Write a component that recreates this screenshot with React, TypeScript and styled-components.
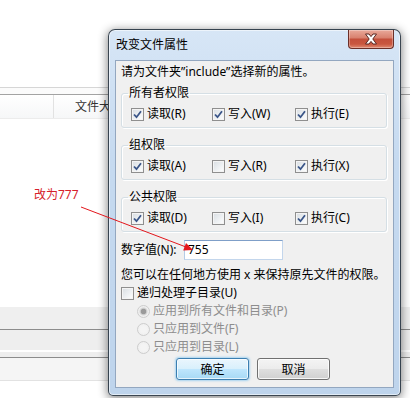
import React from "react";
import styled, { createGlobalStyle } from "styled-components";

const GlobalStyle = createGlobalStyle`
  html, body { margin: 0; padding: 0; background: #ffffff; }
  * { box-sizing: border-box; }
`;

const FONT = `"Noto Sans", "Noto Sans CJK SC", "Microsoft YaHei", sans-serif`;

const Stage = styled.div`
  position: relative;
  width: 410px;
  height: 398px;
  overflow: hidden;
  background: #ffffff;
  font-family: ${FONT};
  font-size: 12px;
  color: #000;
`;

/* ---------- background explorer window ---------- */
const Backdrop = styled.div`
  display: flex;
  flex-direction: column;
  width: 100%;
  height: 100%;
`;

const BlankArea = styled.div<{ $h: number }>`
  height: ${(p) => p.$h}px;
  flex: none;
  background: #ffffff;
`;

const Filler = styled.div`
  flex: 1;
  background: #ffffff;
`;

const RuleBand = styled.div`
  height: 8px;
  flex: none;
  border-top: 1px solid #d6d6d6;
  border-bottom: 1px solid #a3a3a3;
  background: #fbfbfb;
`;

const HeaderRow = styled.div`
  height: 24px;
  flex: none;
  display: flex;
  background: linear-gradient(#ffffff, #f6f7f8);
  border-bottom: 1px solid #ececec;
`;

const HeaderCell = styled.div<{ $w?: number; $pad?: number }>`
  width: ${(p) => (p.$w ? `${p.$w}px` : "auto")};
  flex: ${(p) => (p.$w ? "none" : "1")};
  padding-left: ${(p) => p.$pad ?? 0}px;
  border-right: ${(p) => (p.$w ? "1px solid #e2e2e2" : "none")};
  line-height: 23px;
  color: #333;
  white-space: nowrap;
`;

const Band = styled.div<{ $h: number; $bg: string }>`
  height: ${(p) => p.$h}px;
  flex: none;
  background: ${(p) => p.$bg};
  display: flex;
  flex-direction: column;
  justify-content: flex-end;
`;

const BandHighlight = styled.div`
  height: 2px;
  margin-bottom: 5px;
  background: #ffffff;
`;

const Rule = styled.div<{ $c: string }>`
  height: 1px;
  flex: none;
  background: ${(p) => p.$c};
`;

/* ---------- annotation ---------- */
const Annotation = styled.div`
  position: absolute;
  left: 34px;
  top: 186px;
  line-height: 18px;
  font-size: 12px;
  color: #d6202a;
  white-space: nowrap;
`;

const ArrowLayer = styled.svg`
  position: absolute;
  left: 0;
  top: 0;
  pointer-events: none;
`;

/* ---------- dialog ---------- */
const Dialog = styled.div`
  position: absolute;
  left: 108px;
  top: 29px;
  width: 293px;
  height: 367px;
  display: flex;
  flex-direction: column;
  padding: 0 6px 7px 6px;
  border: 1px solid rgba(20, 30, 40, 0.8);
  border-radius: 7px 7px 5px 5px;
  background: linear-gradient(180deg, #d7e6f6 0%, #c6daf0 35%, #bed4ec 100%);
  box-shadow: 0 2px 10px 1px rgba(0, 0, 0, 0.45),
    inset 0 0 0 1px rgba(255, 255, 255, 0.55);
`;

const TitleBar = styled.div`
  height: 30px;
  flex: none;
  display: flex;
  align-items: flex-start;
`;

const TitleText = styled.div`
  margin-top: 6px;
  padding-left: 1px;
  line-height: 18px;
  font-size: 12px;
  color: #000;
`;

const CloseButton = styled.div`
  margin-left: auto;
  width: 46px;
  height: 19px;
  display: flex;
  align-items: center;
  justify-content: center;
  border: 1px solid #6b2f28;
  border-top: none;
  border-radius: 0 0 4px 4px;
  background: linear-gradient(
    180deg,
    #e9a99a 0%,
    #d98270 42%,
    #c4503c 52%,
    #c9573f 78%,
    #e08a72 100%
  );
  box-shadow: inset 0 0 0 1px rgba(255, 255, 255, 0.3);
`;

const Client = styled.div`
  flex: 1;
  display: flex;
  flex-direction: column;
  padding: 2px 0 6px 5px;
  border: 1px solid #93a7c0;
  background: #f0f0f0;
`;

const TextLine = styled.div<{ $mt?: number }>`
  margin-top: ${(p) => p.$mt ?? 0}px;
  line-height: 18px;
  height: 18px;
  white-space: nowrap;
`;

const Group = styled.fieldset<{ $mt: number }>`
  margin: ${(p) => p.$mt}px 6px 0 0;
  padding: 3px 9px 4px 9px;
  border: 1px solid #d5dfe5;
  border-radius: 3px;
  box-shadow: 1px 1px 0 #ffffff, inset 1px 1px 0 #ffffff;
  min-width: 0;
`;

const GroupTitle = styled.legend`
  margin-left: -3px;
  padding: 0 1px;
  line-height: 18px;
  font-size: 12px;
`;

const CheckRow = styled.div`
  display: grid;
  grid-template-columns: 81px 83px auto;
  height: 18px;
`;

const CheckItem = styled.label<{ $indent?: number; $disabled?: boolean }>`
  display: flex;
  align-items: center;
  gap: 3px;
  height: 18px;
  line-height: 18px;
  padding-left: ${(p) => p.$indent ?? 0}px;
  color: ${(p) => (p.$disabled ? "#8d8d8d" : "#000")};
  white-space: nowrap;
`;

const CheckBox = styled.span`
  width: 13px;
  height: 13px;
  flex: none;
  display: flex;
  align-items: center;
  justify-content: center;
  border: 1px solid #8f8f8f;
  background: linear-gradient(135deg, #d8dde2 0%, #eff2f4 60%, #ffffff 100%);
  box-shadow: inset 0 0 0 1px #f4f4f4;
`;

const RadioDot = styled.span<{ $on?: boolean }>`
  width: 13px;
  height: 13px;
  flex: none;
  border-radius: 50%;
  border: 1px solid #cdcdcd;
  background: ${(p) =>
    p.$on
      ? "radial-gradient(circle, #9a9a9a 0 2.5px, #c9c9c9 3px, #eeeeee 4.5px, #f6f6f6 100%)"
      : "radial-gradient(circle, #f4f4f4 0 3px, #ececec 100%)"};
`;

const NumberRow = styled.div`
  display: flex;
  align-items: center;
  height: 20px;
  margin-top: 8px;
`;

const NumberLabel = styled.span`
  width: 63px;
  flex: none;
  line-height: 18px;
  white-space: nowrap;
`;

const NumberInput = styled.div`
  width: 99px;
  height: 20px;
  padding-left: 3px;
  line-height: 18px;
  background: #ffffff;
  border: 1px solid;
  border-color: #7f9fc8 #c3d6ec #c3d6ec #b4cbe6;
`;

const ButtonRow = styled.div`
  display: flex;
  justify-content: center;
  gap: 8px;
  margin-top: 2px;
  padding-right: 8px;
`;

const PushButton = styled.div<{ $primary?: boolean }>`
  width: 73px;
  height: 22px;
  display: flex;
  align-items: center;
  justify-content: center;
  border-radius: 3px;
  border: 1px solid ${(p) => (p.$primary ? "#3c7fb1" : "#707070")};
  background: ${(p) =>
    p.$primary
      ? "linear-gradient(180deg, #eaf6fd 0%, #d9f0fc 48%, #bee6fd 52%, #a7d9f5 100%)"
      : "linear-gradient(180deg, #f4f4f4 0%, #ececec 48%, #dedede 52%, #d0d0d0 100%)"};
  box-shadow: ${(p) =>
    p.$primary
      ? "inset 0 0 0 1px rgba(255,255,255,0.7), 0 0 2px 1px rgba(110,190,240,0.55)"
      : "inset 0 0 0 1px rgba(255,255,255,0.8)"};
  font-size: 12px;
`;

const CheckMark = () => (
  <svg width="9" height="9" viewBox="0 0 9 9">
    <path d="M1 4.5 L3.5 7.2 L8 1.2" fill="none" stroke="#3a5588" strokeWidth="1.8" />
  </svg>
);

const Check = ({ on, label, indent }: { on: boolean; label: string; indent?: number }) => (
  <CheckItem $indent={indent}>
    <CheckBox>{on && <CheckMark />}</CheckBox>
    <span>{label}</span>
  </CheckItem>
);

const Radio = ({ on, label }: { on?: boolean; label: string }) => (
  <CheckItem $indent={16} $disabled>
    <RadioDot $on={on} />
    <span>{label}</span>
  </CheckItem>
);

type Perm = [string, boolean];
const groups: { title: string; items: Perm[] }[] = [
  { title: "所有者权限", items: [["读取(R)", true], ["写入(W)", true], ["执行(E)", true]] },
  { title: "组权限", items: [["读取(A)", true], ["写入(R)", false], ["执行(X)", true]] },
  { title: "公共权限", items: [["读取(D)", true], ["写入(I)", false], ["执行(C)", true]] },
];

export default function App() {
  return (
    <>
      <GlobalStyle />
      <Stage>
        <Backdrop>
          <BlankArea $h={87} />
          <RuleBand />
          <HeaderRow>
            <HeaderCell $w={54} />
            <HeaderCell $pad={21}>文件大小</HeaderCell>
          </HeaderRow>
          <Filler />
          <Band $h={22} $bg="#efefef" />
          <Rule $c="#8c8c8c" />
          <Band $h={27} $bg="#eeeeee">
            <BandHighlight />
          </Band>
          <Rule $c="#8c8c8c" />
          <Band $h={22} $bg="#f5f5f5" />
          <Rule $c="#e2e2e2" />
          <BlankArea $h={17} />
        </Backdrop>

        <Annotation>改为777</Annotation>

        <Dialog>
          <TitleBar>
            <TitleText>改变文件属性</TitleText>
            <CloseButton>
              <svg width="14" height="12" viewBox="0 0 14 12">
                <path
                  d="M1.5 1 H5 L7 3.6 L9 1 H12.5 L8.8 6 L12.5 11 H9 L7 8.4 L5 11 H1.5 L5.2 6 Z"
                  fill="#ffffff"
                  stroke="#5a2722"
                  strokeWidth="1"
                  strokeLinejoin="round"
                />
              </svg>
            </CloseButton>
          </TitleBar>
          <Client>
            <TextLine>请为文件夹”include”选择新的属性。</TextLine>
            {groups.map((g, i) => (
              <Group key={g.title} $mt={i === 0 ? 3 : 8}>
                <GroupTitle>{g.title}</GroupTitle>
                <CheckRow>
                  {g.items.map(([label, on]) => (
                    <Check key={label} on={on} label={label} />
                  ))}
                </CheckRow>
              </Group>
            ))}
            <NumberRow>
              <NumberLabel>数字值(N):</NumberLabel>
              <NumberInput>755</NumberInput>
            </NumberRow>
            <TextLine $mt={6}>您可以在任何地方使用 x 来保持原先文件的权限。</TextLine>
            <Check on={false} label="递归处理子目录(U)" />
            <Radio on label="应用到所有文件和目录(P)" />
            <Radio label="只应用到文件(F)" />
            <Radio label="只应用到目录(L)" />
            <ButtonRow>
              <PushButton $primary>确定</PushButton>
              <PushButton>取消</PushButton>
            </ButtonRow>
          </Client>
        </Dialog>

        <ArrowLayer width="410" height="398" viewBox="0 0 410 398">
          <line x1="81" y1="207" x2="186" y2="247" stroke="#e3161c" strokeWidth="1" />
          <polygon points="193,250 183.2,250.5 186,243.1" fill="#e3161c" />
        </ArrowLayer>
      </Stage>
    </>
  );
}
